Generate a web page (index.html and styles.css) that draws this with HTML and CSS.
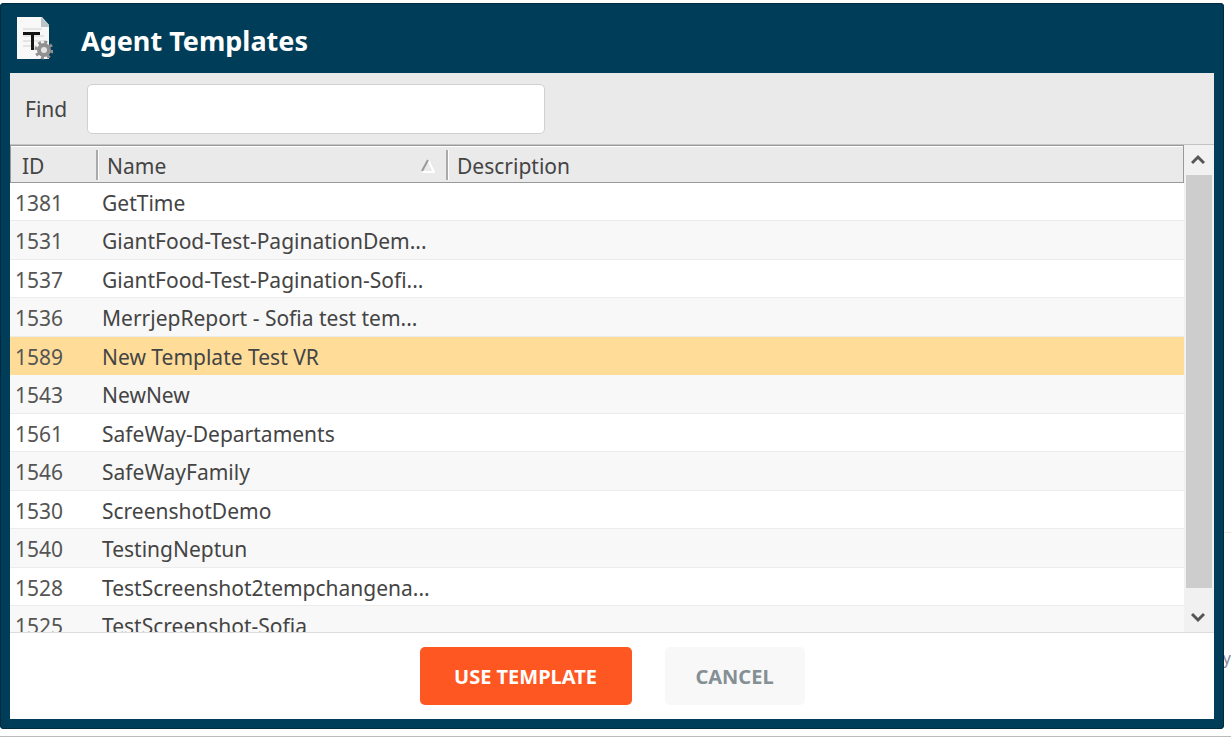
FILE: index.html
```
<!DOCTYPE html>
<html lang="en">
  <head>
    <meta charset="UTF-8" />
    <meta name="viewport" content="width=device-width, initial-scale=1" />
    <title>Agent Templates</title>
    <link rel="stylesheet" href="styles.css">
  </head>
  <body>
    <!-- Page behind the dialog -->
    <div class="backdrop">
      <div class="backdrop-section"><span>y</span></div>
    </div>

    <div class="dialog" role="dialog" aria-labelledby="dialogTitle">
      <header class="titlebar">
        <svg class="doc-icon" width="36" height="43" viewBox="0 0 36 43" aria-hidden="true">
          <path d="M0 0H25L32 8V42H0Z" fill="#f8f8f8" />
          <path d="M24 0L32 8V10H24Z" fill="#b9c4ca" />
          <path d="M6 12H25M6 19H27M6 24H27M6 29H20" stroke="#d2d2d2" stroke-width="1" />
          <path d="M6 15V18H14V33H17V18H23V15Z" fill="#151515" />
          <circle cx="27" cy="33" r="5" fill="#e4e4e4" stroke="#909090" stroke-width="4" />
          <circle cx="27" cy="33" r="8" fill="none" stroke="#909090" stroke-width="3" stroke-dasharray="3 3.28" />
        </svg>
        <h1 id="dialogTitle">Agent Templates</h1>
      </header>

      <div class="content">
        <div class="find-bar">
          <label for="find">Find</label>
          <input type="text" id="find" />
        </div>

        <div class="list">
          <div class="list-view">
            <table>
              <colgroup>
                <col class="col-id" />
                <col class="col-name" />
                <col />
              </colgroup>
              <thead>
                <tr>
                  <th>ID</th>
                  <th>
                    <div class="sorted">
                      Name
                      <svg width="14" height="14" viewBox="0 0 14 14" aria-hidden="true">
                        <path d="M7 1L13 13H1" fill="none" stroke="#ffffff" stroke-width="2" />
                        <path d="M1 12L7 1" stroke="#999999" stroke-width="2" />
                      </svg>
                    </div>
                  </th>
                  <th>Description</th>
                </tr>
              </thead>
              <tbody>
                <tr><td>1381</td><td>GetTime</td><td></td></tr>
                <tr><td>1531</td><td>GiantFood-Test-PaginationDem...</td><td></td></tr>
                <tr><td>1537</td><td>GiantFood-Test-Pagination-Sofi...</td><td></td></tr>
                <tr><td>1536</td><td>MerrjepReport - Sofia test tem...</td><td></td></tr>
                <tr class="selected"><td>1589</td><td>New Template Test VR</td><td></td></tr>
                <tr><td>1543</td><td>NewNew</td><td></td></tr>
                <tr><td>1561</td><td>SafeWay-Departaments</td><td></td></tr>
                <tr><td>1546</td><td>SafeWayFamily</td><td></td></tr>
                <tr><td>1530</td><td>ScreenshotDemo</td><td></td></tr>
                <tr><td>1540</td><td>TestingNeptun</td><td></td></tr>
                <tr><td>1528</td><td>TestScreenshot2tempchangena...</td><td></td></tr>
                <tr><td>1525</td><td>TestScreenshot-Sofia</td><td></td></tr>
              </tbody>
            </table>
          </div>

          <div class="scrollbar">
            <button type="button" aria-label="Scroll up">
              <svg width="14" height="12" viewBox="0 0 14 12"><path d="M1 9L7 3L13 9" /></svg>
            </button>
            <div class="thumb"></div>
            <button type="button" aria-label="Scroll down">
              <svg width="14" height="12" viewBox="0 0 14 12"><path d="M1 3L7 9L13 3" /></svg>
            </button>
          </div>
        </div>

        <footer class="actions">
          <button type="button" class="btn primary">USE TEMPLATE</button>
          <button type="button" class="btn">CANCEL</button>
        </footer>
      </div>
    </div>
  </body>
</html>
```

FILE: styles.css
```
* {
  box-sizing: border-box;
}
html,
body {
  margin: 0;
  height: 100%;
  overflow: hidden;
}
body {
  font-family: "Noto Sans", "Open Sans", sans-serif;
  font-size: 21px;
  line-height: 28px;
  color: #444444;
  background-color: #fefefe;
  padding: 3px 7px 8px 0;
}

/* Page behind the dialog */
.backdrop {
  position: absolute;
  inset: 0;
  border-bottom: 1px solid #b8bcbe;
  display: flex;
  flex-direction: column;
  justify-content: flex-end;
}
.backdrop-section {
  height: 204px;
  padding-top: 111px;
  border-top: 1px solid #f6e8e8;
  text-align: right;
  font-size: 16px;
  color: #8c8c9c;
}

.dialog {
  position: relative;
  height: 100%;
  display: flex;
  flex-direction: column;
  padding: 0 10px;
  padding-bottom: 10px;
  background-color: #003d58;
  border-radius: 4px;
  box-shadow: inset 0 0 0 1px #002b40;
}
.titlebar {
  flex: none;
  height: 70px;
  display: flex;
  align-items: center;
  gap: 28px;
  padding: 0 7px;
}
.titlebar h1 {
  margin: 0;
  padding-top: 6px;
  font-size: 27px;
  line-height: 32px;
  color: #ffffff;
}
.doc-icon {
  flex: none;
}
.content {
  flex: 1;
  min-height: 0;
  display: flex;
  flex-direction: column;
  background-color: #ffffff;
}

.find-bar {
  flex: none;
  height: 72px;
  display: flex;
  align-items: center;
  gap: 20px;
  padding: 0 15px;
  background-color: #eaeaea;
  border-bottom: 1px solid #c4c4c4;
}
.find-bar input {
  width: 458px;
  height: 50px;
  padding: 0 12px;
  font: inherit;
  border: 1px solid #d0d0d0;
  border-radius: 5px;
  background-color: #ffffff;
}

/* Template list */
.list {
  flex: 1;
  min-height: 0;
  display: flex;
  border-bottom: 1px solid #dcdcdc;
}
.list-view {
  flex: 1;
  overflow: hidden;
}
table {
  width: 100%;
  table-layout: fixed;
  border-collapse: separate;
  border-spacing: 0;
}
.col-id {
  width: 86px;
}
.col-name {
  width: 350px;
}
thead tr {
  height: 38px;
  background-color: #eaeaea;
}
th {
  position: relative;
  padding: 4px 11px 0;
  font-weight: normal;
  text-align: left;
  border-top: 1px solid #999999;
  border-bottom: 1px solid #999999;
  box-shadow: inset 0 1px #ffffff;
}
th:first-child {
  border-left: 1px solid #999999;
}
th:last-child {
  border-right: 1px solid #999999;
}
/* column divider */
th + th::before {
  content: "";
  position: absolute;
  left: 0;
  top: 4px;
  bottom: 2px;
  width: 2px;
  background-color: #aaaaaa;
  border-right: 1px solid #ffffff;
}
.sorted {
  display: flex;
  align-items: center;
  justify-content: space-between;
}
tbody tr {
  height: 38px;
}
tbody tr:nth-child(even) {
  height: 39px;
  background-color: #f8f8f8;
}
tbody tr.selected {
  background-color: #ffdd99;
}
td {
  padding: 2px 6px 0;
  white-space: nowrap;
  border-bottom: 1px solid #ececec;
}
td:first-child {
  padding-left: 5px;
  color: #555555;
}
.selected td {
  border-color: #ffdd99;
}

.scrollbar {
  flex: none;
  width: 30px;
  display: flex;
  flex-direction: column;
  padding-right: 2px;
  background-color: #f1f1f1;
}
.scrollbar button {
  height: 30px;
  padding: 0;
  border: none;
  background: none;
}
.scrollbar svg {
  display: block;
  margin: auto;
}
.scrollbar path {
  fill: none;
  stroke: #555555;
  stroke-width: 3;
}
.thumb {
  flex: 1;
  margin: 0 0 14px 2px;
  background-color: #cdcdcd;
}

.actions {
  flex: none;
  display: flex;
  justify-content: center;
  gap: 33px;
  padding: 14px 0;
}
.btn {
  width: 140px;
  height: 58px;
  padding: 0;
  border: none;
  border-radius: 5px;
  font-family: inherit;
  font-size: 20px;
  font-weight: 700;
  color: #849095;
  background-color: #f8f8f8;
  cursor: pointer;
}
.btn.primary {
  width: 212px;
  color: #ffffff;
  background-color: #ff5722;
}
```
